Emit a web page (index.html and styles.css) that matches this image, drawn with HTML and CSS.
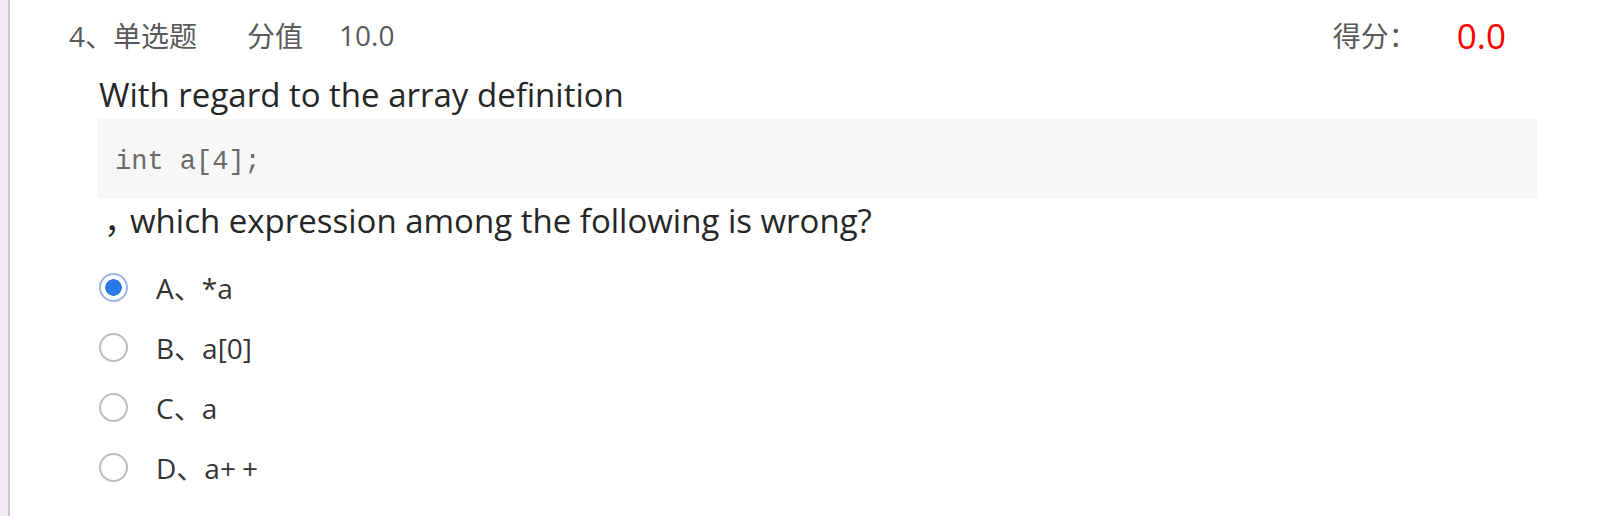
FILE: index.html
```html
<!DOCTYPE html>
<html lang="zh-CN">
<head>
    <meta charset="UTF-8" />
    <title>单选题</title>
    <link rel="stylesheet" href="styles.css">
</head>
<body>

<div class="page">
    <div class="rail"></div>

    <div class="question">
        <div class="q-head">
            <div class="q-meta">
                <span class="q-type">4、单选题</span>
                <span class="q-worth">分值</span>
                <span class="q-worth-val">10.0</span>
            </div>
            <div class="q-result">
                <span class="q-got">得分：</span>
                <span class="q-got-val">0.0</span>
            </div>
        </div>

        <div class="q-body">
            <p class="q-text">With regard to the array definition</p>
            <pre class="q-code">int a[4];</pre>
            <p class="q-text q-cont"><span class="comma">，</span>which expression among the following is wrong?</p>

            <ul class="options">
                <li class="option checked"><span class="radio"></span><span class="opt-text">A、*a</span></li>
                <li class="option"><span class="radio"></span><span class="opt-text">B、a[0]</span></li>
                <li class="option"><span class="radio"></span><span class="opt-text">C、a</span></li>
                <li class="option"><span class="radio"></span><span class="opt-text">D、a+<span class="plus">+</span></span></li>
            </ul>
        </div>
    </div>
</div>

</body>
</html>
```

FILE: styles.css
```css
/* PAGE */
html, body {
    margin: 0;
    padding: 0;
    height: 100%;
    background: #fff;
    font-family: 'Segoe UI', 'Open Sans', 'Noto Sans CJK SC', sans-serif;
    overflow: hidden;
}

.page {
    display: flex;
    min-height: 100%;
}

.rail {
    width: 8px;
    flex: none;
    background: #f3e6f5;
    border-right: 2px solid #c9c9c9;
}

.question {
    flex: 1;
    padding: 15px 93px 0 59px;
}

/* HEADER */
.q-head {
    display: flex;
    justify-content: space-between;
    align-items: center;
    height: 40px;
    font-size: 28px;
    color: #595959;
}

.q-meta {
    display: flex;
    align-items: center;
}
.q-worth {
    margin-left: 50px;
}
.q-worth-val {
    margin-left: 36px;
}

.q-result {
    display: flex;
    align-items: center;
}
.q-got-val {
    margin-left: 40px;
    font-size: 35px;
    color: #f00;
}

/* BODY */
.q-body {
    padding-left: 30px;
    margin-right: -31px;
    color: #262626;
}

.q-text {
    margin: 0;
    font-size: 33px;
    line-height: 40px;
}
.q-text:first-child {
    margin-top: 20px;
}
.q-cont {
    text-indent: 5px;
}
.comma {
    letter-spacing: -7px;
}

.q-code {
    margin: 4px 0 2px -2px;
    padding: 7px 18px 0;
    height: 73px;
    line-height: 73px;
    background: #f7f7f7;
    font-family: 'Liberation Mono', monospace;
    font-size: 27px;
    color: #6a6a6a;
}

.options {
    list-style: none;
    margin: 16px 0 0 0;
    padding: 0;
}

.option {
    display: flex;
    align-items: center;
    height: 60px;
    font-size: 28px;
    color: #333;
}

.plus {
    margin-left: 6px;
}

.radio {
    box-sizing: border-box;
    width: 29px;
    height: 29px;
    margin-right: 28px;
    border: 2px solid #bdbdbd;
    border-radius: 50%;
    background: #fff;
}
.option.checked .radio {
    border-color: #9fb6e6;
    background: radial-gradient(circle, #2b78e6 0 8px, #fff 8.5px);
}
```
